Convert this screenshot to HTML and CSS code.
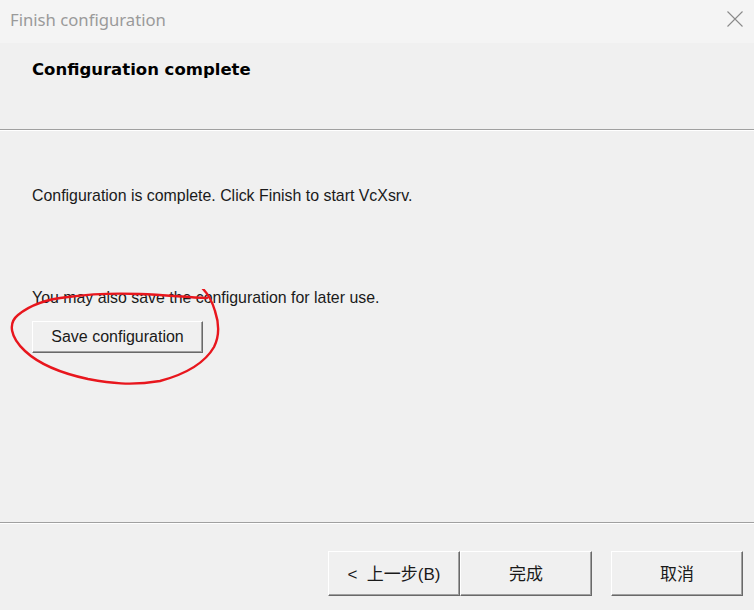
FILE: index.html
```html
<!DOCTYPE html>
<html lang="en">

<head>
	<meta charset="utf-8">
	<title>Finish configuration</title>
	<link rel="stylesheet" href="styles.css">
</head>

<body>
	<div class="dialog">
		<div class="titlebar">
			<span class="title">Finish configuration</span>
			<svg class="close" width="16" height="16" viewBox="0 0 16 16">
				<path d="M0.5 0.5 L15.5 15.5 M15.5 0.5 L0.5 15.5" stroke="#8a8a8a" stroke-width="1.1" fill="none"/>
			</svg>
		</div>

		<div class="header">
			<h1>Configuration complete</h1>
		</div>
		<div class="etched"></div>

		<div class="content">
			<p class="first">Configuration is complete. Click Finish to start VcXsrv.</p>
			<p class="second">You may also save the configuration for later use.</p>
			<button class="btn save">Save configuration</button>

			<!-- red marker ring drawn around the save button -->
			<svg class="ring" width="230" height="110" viewBox="0 0 230 110">
				<path d="M203 0 C208 5 212 12 215 22 C219 34 220 46 214 58 C206 72 190 84 160 92 C130 97 110 94 88 90 C60 84 40 76 25 62 C10 48 8 34 18 26 C30 16 48 10 68 8 C90 5 115 4 140 5 C165 6 185 8 207 9"
					stroke="#e8161d" stroke-width="2.4" fill="none" stroke-linecap="round" stroke-linejoin="round"/>
			</svg>
		</div>

		<div class="etched"></div>
		<div class="footer">
			<button class="btn nav">&lt;&nbsp; 上一步(B)</button>
			<button class="btn nav">完成</button>
			<button class="btn nav cancel">取消</button>
		</div>
	</div>
</body>

</html>
```

FILE: styles.css
```css
body {
	margin: 0;
	background-color: #f0f0f0;
	font-family: 'Liberation Sans', Arial, 'Noto Sans CJK SC', sans-serif;
	color: #1a1a1a;
}

.dialog {
	width: 754px;
	height: 610px;
	display: flex;
	flex-direction: column;
	overflow: hidden;
}

.titlebar {
	height: 43px;
	flex: none;
	background-color: #f4f4f4;
	display: flex;
	align-items: center;
	justify-content: space-between;
	padding: 0 11px 4px 10px;
	box-sizing: border-box;
}

.title {
	font-family: 'Noto Sans', 'Segoe UI', sans-serif;
	font-size: 16.7px;
	color: #9a9a9a;
}

.close {
	align-self: flex-start;
	margin-top: 11px;
}

.header {
	height: 86px;
	flex: none;
	padding: 0 32px;
	box-sizing: border-box;
}

h1 {
	margin: 0;
	padding-top: 17px;
	font-family: 'DejaVu Sans', Tahoma, sans-serif;
	font-size: 16.5px;
	font-weight: bold;
	line-height: 20px;
	color: #000;
}

/* two-line sunken separator */
.etched {
	height: 1px;
	flex: none;
	background-color: #a0a0a0;
	border-bottom: 1px solid #fff;
}

.content {
	flex: 1;
	position: relative;
	padding: 56px 32px 0;
}

.content p {
	margin: 0;
	font-size: 15.9px;
	line-height: 18px;
}

.content .second {
	margin-top: 84px;
}

.btn {
	display: flex;
	align-items: center;
	justify-content: center;
	font-family: 'Liberation Sans', Arial, 'Noto Sans CJK SC', sans-serif;
	font-size: 16px;
	color: #1a1a1a;
	background-color: #f0f0f0;
	border: 1px solid;
	border-color: #ffffff #696969 #696969 #ffffff;
	box-shadow: inset -1px -1px 0 #a0a0a0;
	padding: 0;
	box-sizing: border-box;
}

.save {
	margin-top: 14px;
	width: 171px;
	height: 32px;
}

.ring {
	position: absolute;
	left: 0;
	top: 158px;
	pointer-events: none;
}

.footer {
	flex: none;
	height: 86px;
	display: flex;
	justify-content: flex-end;
	align-items: flex-start;
	padding: 27px 11px 0 0;
	box-sizing: border-box;
}

.nav {
	width: 132px;
	height: 45px;
	padding-bottom: 3px;
	font-size: 17px;
}

.nav.cancel {
	margin-left: 19px;
}
```
